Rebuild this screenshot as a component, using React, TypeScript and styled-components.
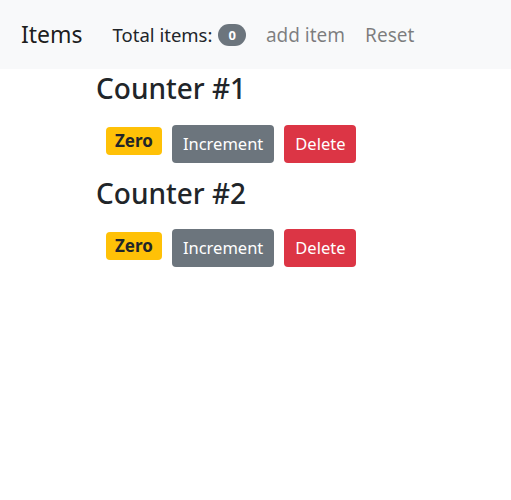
import React, { useState } from "react";
import styled, { createGlobalStyle } from "styled-components";

const GlobalStyle = createGlobalStyle`
  body {
    margin: 0;
    font-family: "Noto Sans", "Open Sans", sans-serif;
    color: #212529;
    background: #fff;
  }
`;

const Navbar = styled.nav`
  display: flex;
  align-items: center;
  height: 69px;
  padding: 0 21px;
  background: #f8f9fa;
  box-sizing: border-box;
`;

const Brand = styled.span`
  font-size: 23px;
  color: rgba(0, 0, 0, 0.9);
  margin-right: 30px;
  margin-top: -2px;
`;

const NavText = styled.span`
  font-size: 18.5px;
  color: #212529;
  display: flex;
  align-items: center;
`;

const Pill = styled.span`
  display: inline-block;
  margin-left: 6px;
  padding: 4px 10px;
  font-size: 13px;
  font-weight: 700;
  line-height: 14px;
  border-radius: 11px;
  background: #6c757d;
  color: #fff;
`;

const NavLink = styled.a`
  font-size: 19px;
  color: rgba(0, 0, 0, 0.5);
  margin-left: 20px;
  cursor: pointer;
`;

const Main = styled.main`
  padding: 0 96px;
`;

const Heading = styled.h3`
  margin: 0;
  padding-top: 3px;
  font-size: 28px;
  font-weight: 500;
  line-height: 1.2;
`;

const Row = styled.div`
  display: flex;
  align-items: center;
  gap: 10px;
  padding: 19px 0 11px 10px;
`;

const Badge = styled.span<{ $zero: boolean }>`
  display: inline-block;
  padding: 5px 9px;
  font-size: 17px;
  font-weight: 700;
  line-height: 18px;
  border-radius: 4px;
  margin-top: -5px;
  background: ${(p) => (p.$zero ? "#ffc107" : "#007bff")};
  color: ${(p) => (p.$zero ? "#212529" : "#fff")};
`;

const Button = styled.button<{ $variant: "secondary" | "danger" }>`
  font-family: inherit;
  font-size: 16.5px;
  line-height: 26px;
  padding: 6px 11px;
  border: none;
  border-radius: 4px;
  color: #fff;
  background: ${(p) => (p.$variant === "danger" ? "#dc3545" : "#6c757d")};
  cursor: pointer;
`;

interface CounterItem {
  id: number;
  value: number;
}

const App = () => {
  const [counters, setCounters] = useState<CounterItem[]>([
    { id: 1, value: 0 },
    { id: 2, value: 0 },
  ]);

  const total = counters.filter((c) => c.value > 0).length;

  return (
    <>
      <GlobalStyle />
      <Navbar>
        <Brand>Items</Brand>
        <NavText>
          Total items:<Pill>{total}</Pill>
        </NavText>
        <NavLink
          onClick={() =>
            setCounters([...counters, { id: counters.length + 1, value: 0 }])
          }
        >
          add item
        </NavLink>
        <NavLink onClick={() => setCounters(counters.map((c) => ({ ...c, value: 0 })))}>
          Reset
        </NavLink>
      </Navbar>
      <Main>
        {counters.map((c) => (
          <div key={c.id}>
            <Heading>Counter #{c.id}</Heading>
            <Row>
              <Badge $zero={c.value === 0}>{c.value === 0 ? "Zero" : c.value}</Badge>
              <Button
                $variant="secondary"
                onClick={() =>
                  setCounters(counters.map((x) => (x.id === c.id ? { ...x, value: x.value + 1 } : x)))
                }
              >
                Increment
              </Button>
              <Button
                $variant="danger"
                onClick={() => setCounters(counters.filter((x) => x.id !== c.id))}
              >
                Delete
              </Button>
            </Row>
          </div>
        ))}
      </Main>
    </>
  );
};

export default App;
